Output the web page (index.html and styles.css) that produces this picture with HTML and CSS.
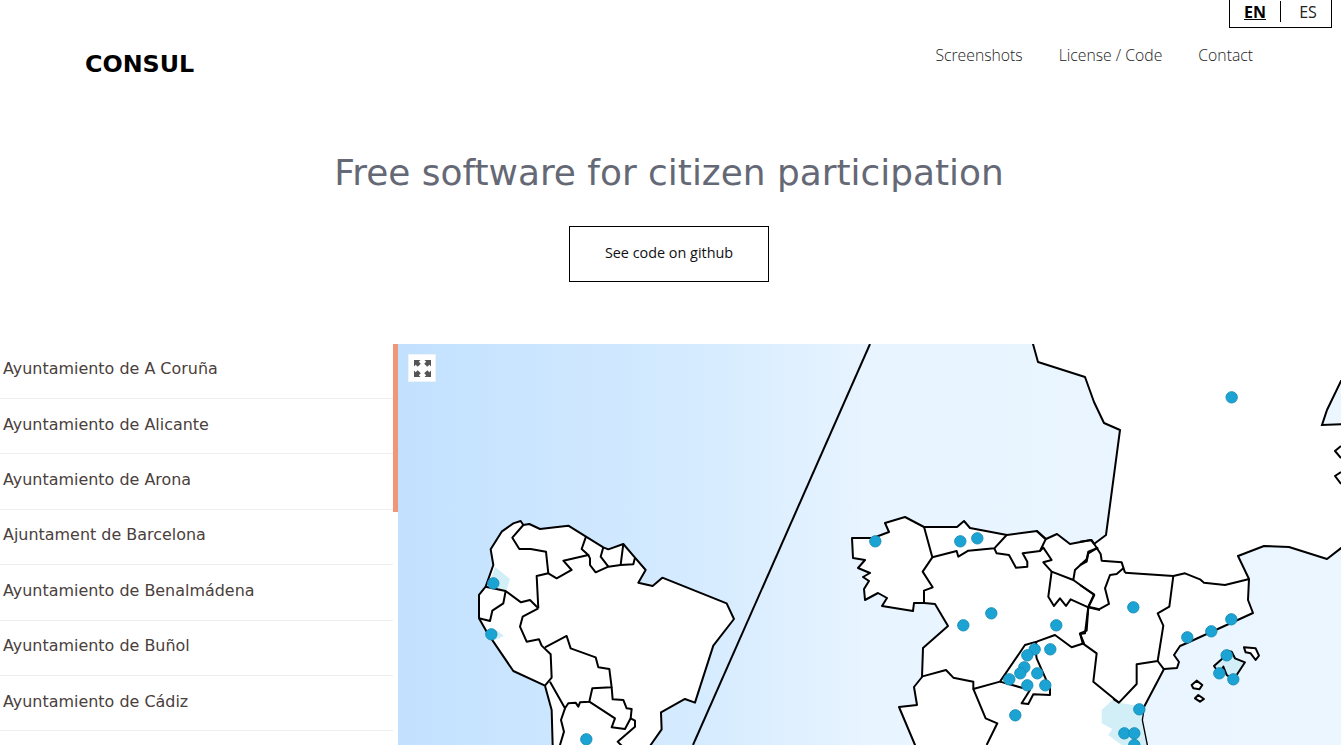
FILE: index.html
```html
<!DOCTYPE html>
<html lang="en">
<head>
    <meta charset="UTF-8">
    <meta name="viewport" content="width=device-width, initial-scale=1.0">
    <title>CONSUL</title>
    <link rel="stylesheet" href="styles.css">
</head>
<body>
    <!-- Language switcher -->
    <div class="lang-row">
        <div class="lang-box">
            <a class="lang-link lang-active" href="#">EN</a>
            <a class="lang-link lang-other" href="#">ES</a>
        </div>
    </div>

    <!-- Header -->
    <header class="site-header">
        <div class="logo">CONSUL</div>
        <nav class="main-nav">
            <a href="#">Screenshots</a>
            <a href="#">License / Code</a>
            <a href="#">Contact</a>
        </nav>
    </header>

    <section class="hero">
        <h1>Free software for citizen participation</h1>
        <a class="code-button" href="#">See code on github</a>
    </section>

    <!-- Cities list and map -->
    <section class="directory">
        <ul class="city-list">
            <li>Ayuntamiento de A Coruña</li>
            <li>Ayuntamiento de Alicante</li>
            <li>Ayuntamiento de Arona</li>
            <li>Ajuntament de Barcelona</li>
            <li>Ayuntamiento de Benalmádena</li>
            <li>Ayuntamiento de Buñol</li>
            <li>Ayuntamiento de Cádiz</li>
        </ul>
        <div class="scroll-rail"><div class="scroll-thumb"></div></div>
        <div class="map">
            <svg class="map-svg" viewBox="398 344 943 401" width="943" height="401">
                <!-- Atlantic divider -->
                <path class="border" d="M870 344L693 745"/>

                <!-- South America, coordinates at 3x from 460,510 -->
                <g transform="translate(460 510) scale(.3333)">
                    <path class="land" d="M57 325L57 255L77 230L100 165L92 118L125 65L160 40L182 33L190 45L208 42L240 57L325 47L378 80L430 112L445 118L490 102L525 143L557 180L535 218L578 228L607 203L800 280L822 327L760 407L705 578L675 567L603 607L605 658L572 705L572 720L278 720L278 705L275 600L255 527L160 483L100 395L80 365Z"/>
                    <path class="tint" d="M105 170L150 207L140 240L85 230Z"/>
                    <path class="tint" d="M110 360L132 378L105 390L95 375Z"/>
                    <path class="line" d="M190 45L157 83L178 117L212 117L258 125L265 190L230 198L235 295"/>
                    <path class="line" d="M378 80L365 117L385 135L310 152L335 180L290 205L265 190"/>
                    <path class="line" d="M385 135L390 145L390 165L407 187L445 170L482 165L520 163L525 143"/>
                    <path class="line" d="M430 112L422 140L445 170M490 102L482 165"/>
                    <path class="line" d="M77 230L137 243L183 277L210 270L235 295"/>
                    <path class="line" d="M57 325L90 333L97 302L130 280L137 243"/>
                    <path class="line" d="M235 295L188 320L180 350L200 395L237 388L245 407L272 433L275 503L255 527"/>
                    <path class="line" d="M255 412L320 378L332 415L407 442L415 472L448 477L455 532L397 535L388 575L360 577L355 590L347 578L325 580L315 595L270 515"/>
                    <path class="line" d="M455 532L458 568L490 570L500 595L515 597L512 625L495 657L455 652L465 625L388 575"/>
                    <path class="line" d="M315 595L303 630L312 665L300 705L298 720M512 625L525 632L525 650L473 695L488 710"/>
                    <circle class="dot" cx="100" cy="220" r="17"/>
                    <circle class="dot" cx="94" cy="373" r="17"/>
                    <circle class="dot" cx="379" cy="688" r="17"/>
                </g>

                <!-- Europe outline, page coordinates -->
                <path class="land-page" d="M1033 344L1038 362L1085 377L1094 402L1104 423L1120 430L1106 535L1094 544L1091 540L1070 544L1057 534L1046 539L1037 531L1007 535L970 528L964 521L957 527L924 527L905 517L885 523L889 532L873 538L852 538L853 558L865 560L858 568L870 573L863 577L869 581L864 589L865 600L878 593L887 598L882 606L913 611L914 603L924 603L935 604L948 626L923 648L922 677L914 687L917 705L899 707L915 745L915 760L1150 760L1147 745L1142 720L1144 707L1164 669L1177 668L1179 662L1174 655L1180 646L1187 643L1253 613L1248 600L1249 579L1238 556L1264 546L1289 547L1327 559L1345 545L1345 340L1033 340Z"/>
                <path class="sea" d="M1345 381L1341 381L1327 410L1322 425L1345 424Z"/>
                <path class="outline-page" d="M1341 446L1335 451L1341 458M1341 472L1335 476L1341 484"/>

                <!-- Spain, coordinates at 3x from 840,500 -->
                <g transform="translate(840 500) scale(.3333)">
                    <path class="line" d="M252 80L277 172L248 215L278 262L252 272L252 310"/>
                    <path class="line" d="M277 172L350 153L355 170L385 152L463 145L500 105"/>
                    <path class="line" d="M463 145L470 160L507 165L528 203L562 200L562 185L548 160L600 153L617 118L590 93"/>
                    <path class="line" d="M600 153L610 143L635 180L610 187L635 215L700 240L705 210L740 178L745 155L775 143"/>
                    <path class="line" d="M635 215L625 290L642 318L660 295L678 318L692 298L745 322L763 285L700 240"/>
                    <path class="line" d="M745 322L740 392L720 400L732 430L695 442L645 405L590 425L555 435L480 545L400 567L400 545L340 533L318 510L245 530"/>
                    <path class="line" d="M590 425L585 440L590 475L630 565L630 585L580 583L565 612L545 610L570 570L480 545"/>
                    <path class="line" d="M400 567L437 655L472 670L440 735"/>
                    <path class="line" d="M745 322L780 330"/>
                </g>

                <!-- East of Spain and Balearics, coordinates at 3x from 1080,530 -->
                <g transform="translate(1080 530) scale(.3333)">
                    <path class="tint" d="M100 507L65 540L65 580L97 597L85 615L125 645L200 645L185 570L192 530L117 518Z"/>
                    <path class="line" d="M135 128L280 138L268 230L233 250L250 287L233 393L170 403L170 462L117 518L40 455L50 370L8 340L0 310"/>
                    <path class="line" d="M100 507L117 518M233 393L252 418"/>
                    <path class="line" d="M280 138L315 130L360 148L372 158L435 165L508 147"/>
                    <path class="line" d="M135 128L125 97L65 92L62 72L35 30L0 35"/>
                    <path class="line" d="M50 55L25 70L20 95L0 105"/>
                    <path class="line" d="M130 115L110 132L90 135L75 175L87 222L57 238L25 230L42 193L0 165"/>
                    <path class="line" d="M25 230L15 310L0 312"/>
                    <path class="island-tint" d="M440 362L455 365L465 385L495 397L470 435L460 448L440 435L430 410L418 430L402 408L425 388Z"/>
                    <path class="island" d="M492 352L527 355L537 377L527 390L512 370L497 367Z"/>
                    <path class="island" d="M335 465L350 452L367 465L358 478L340 475Z"/>
                    <path class="island" d="M345 505L355 495L372 507L360 515Z"/>
                </g>

                <g transform="translate(840 500) scale(.3333)">
                    <circle class="dot" cx="106" cy="124" r="17"/>
                    <circle class="dot" cx="361" cy="124" r="17"/>
                    <circle class="dot" cx="412" cy="115" r="17"/>
                    <circle class="dot" cx="454" cy="340" r="17"/>
                    <circle class="dot" cx="370" cy="376" r="17"/>
                    <circle class="dot" cx="649" cy="376" r="17"/>
                    <circle class="dot" cx="631" cy="448" r="17"/>
                    <circle class="dot" cx="584" cy="448" r="17"/>
                    <circle class="dot" cx="562" cy="466" r="17"/>
                    <circle class="dot" cx="553" cy="502" r="17"/>
                    <circle class="dot" cx="541" cy="520" r="17"/>
                    <circle class="dot" cx="592" cy="520" r="17"/>
                    <circle class="dot" cx="508" cy="538" r="17"/>
                    <circle class="dot" cx="562" cy="556" r="17"/>
                    <circle class="dot" cx="616" cy="556" r="17"/>
                    <circle class="dot" cx="526" cy="646" r="17"/>
                </g>
                <g transform="translate(1080 530) scale(.3333)">
                    <circle class="dot" cx="160" cy="232" r="17"/>
                    <circle class="dot" cx="322" cy="322" r="17"/>
                    <circle class="dot" cx="394" cy="304" r="17"/>
                    <circle class="dot" cx="454" cy="268" r="17"/>
                    <circle class="dot" cx="440" cy="376" r="17"/>
                    <circle class="dot" cx="418" cy="430" r="17"/>
                    <circle class="dot" cx="460" cy="448" r="17"/>
                    <circle class="dot" cx="178" cy="538" r="17"/>
                    <circle class="dot" cx="133" cy="610" r="17"/>
                    <circle class="dot" cx="163" cy="610" r="17"/>
                    <circle class="dot" cx="163" cy="645" r="17"/>
                </g>
                <g transform="translate(1020 340) scale(.3333)">
                    <circle class="dot" cx="635" cy="172" r="17"/>
                </g>
            </svg>

            <!-- Fullscreen control -->
            <button class="fullscreen" type="button" aria-label="Fullscreen">
                <svg viewBox="0 0 17 17" width="17" height="17">
                    <path d="M0 0H6.5L4.8 1.7L6.8 3.7L3.7 6.8L1.7 4.8L0 6.5Z"/>
                    <path d="M17 0V6.5L15.3 4.8L13.3 6.8L10.2 3.7L12.2 1.7L10.5 0Z"/>
                    <path d="M0 17V10.5L1.7 12.2L3.7 10.2L6.8 13.3L4.8 15.3L6.5 17Z"/>
                    <path d="M17 17H10.5L12.2 15.3L10.2 13.3L13.3 10.2L15.3 12.2L17 10.5Z"/>
                </svg>
            </button>
        </div>
    </section>
</body>
</html>
```

FILE: styles.css
```css
html, body {
    height: 100%;
    overflow: hidden;
}

body {
    font-family: "DejaVu Sans", sans-serif;
    margin: 0;
    padding: 0;
    background-color: #fff;
}

a {
    color: inherit;
    text-decoration: none;
}

.lang-row {
    display: flex;
    justify-content: flex-end;
    padding-right: 9px;
    height: 28px;
}

.lang-box {
    display: flex;
    align-items: center;
    width: 103px;
    height: 28px;
    box-sizing: border-box;
    border: 1px solid #000;
    border-top: none;
    font-family: "Open Sans", sans-serif;
    font-size: 16px;
    color: #222;
}

.lang-link {
    height: 21px;
    line-height: 23px;
    margin-top: -4px;
    text-align: center;
}

.lang-active {
    width: 51px;
    box-sizing: border-box;
    border-right: 1px solid #000;
    font-weight: 700;
    color: #000;
    text-decoration: underline;
}

.lang-other {
    flex: 1;
    padding-left: 4px;
}

.site-header {
    display: flex;
    justify-content: space-between;
    height: 72px;
    padding: 0 88px 0 85px;
}

.logo {
    font-size: 23.8px;
    font-weight: 700;
    line-height: 28px;
    margin-top: 22px;
    color: #000;
}

.main-nav {
    display: flex;
    gap: 36px;
    font-family: "Open Sans", sans-serif;
    font-size: 15.75px;
    font-weight: 300;
    line-height: 22px;
    margin-top: 16px;
    color: #222;
}

.hero {
    display: flex;
    flex-direction: column;
    align-items: center;
    height: 244px;
    padding-right: 3px;
}

.hero h1 {
    margin: 51px 0 0;
    font-size: 35.9px;
    font-weight: 400;
    line-height: 44px;
    color: #656875;
}

.code-button {
    display: flex;
    align-items: center;
    justify-content: center;
    width: 200px;
    height: 56px;
    box-sizing: border-box;
    margin-top: 31px;
    padding-bottom: 3px;
    border: 1px solid #000;
    font-family: "Open Sans", sans-serif;
    font-size: 14.4px;
    color: #111;
}

.directory {
    display: flex;
    height: 401px;
}

.city-list {
    width: 393px;
    margin: -0.4px 0 0;
    padding: 0;
    list-style: none;
    overflow: hidden;
    font-size: 15.95px;
    color: #4a403c;
}

.city-list li {
    height: 53.8px;
    line-height: 50.6px;
    padding: 0.6px 0 0 3px;
    border-bottom: 1px solid #eee;
}

.scroll-rail {
    width: 5px;
}

.scroll-thumb {
    height: 168px;
    background-color: #f0967a;
}

.map {
    position: relative;
    flex: 1;
    overflow: hidden;
    background: linear-gradient(90deg, #c2e1ff 0, #d5ebff 300px, #e8f4ff 470px, #ebf6ff 100%);
}

.map-svg {
    display: block;
}

.fullscreen {
    position: absolute;
    top: 10px;
    left: 10px;
    display: flex;
    align-items: center;
    justify-content: center;
    width: 28px;
    height: 28px;
    padding: 0;
    border: 1px solid #eef3f8;
    background-color: #fff;
}

.fullscreen path {
    fill: #555;
}

.border, .line, .land, .land-page, .outline-page, .island, .island-tint {
    stroke: #000;
    stroke-linejoin: round;
}

.border, .land-page, .outline-page {
    stroke-width: 2px;
}

.border, .line, .outline-page {
    fill: none;
}

.line, .land, .island, .island-tint {
    stroke-width: 6px;
}

.land, .land-page, .island {
    fill: #fff;
}

.sea {
    fill: #ebf6ff;
    stroke: #000;
    stroke-width: 2px;
}

.tint {
    fill: #d2eef7;
}

.island-tint {
    fill: #d2eef7;
}

.dot {
    fill: #1ba3d3;
    stroke: #1a90b9;
    stroke-width: 3px;
}
```
